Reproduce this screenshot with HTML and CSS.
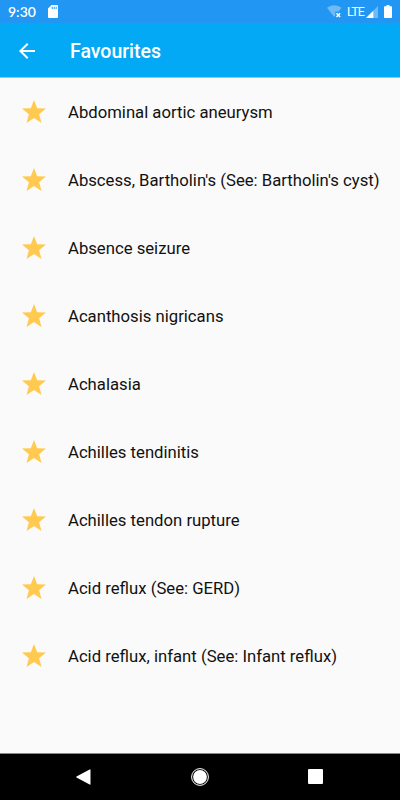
FILE: index.html
```html
<!DOCTYPE html>
<html lang="en">
<head>
    <meta charset="UTF-8">
    <meta name="viewport" content="width=device-width, initial-scale=1.0">
    <title>Favourites</title>
    <link rel="stylesheet" href="styles.css">
</head>
<body>
    <!-- shared star shape -->
    <svg class="defs">
        <symbol id="star" viewBox="0 0 24 23">
            <path d="M12 0l3.200 8.200 8.800.4-6.900 5.600 2.400 8.700L12 18l-7.500 4.900 2.400-8.700L0 8.600l8.800-.4z"/>
        </symbol>
    </svg>

    <div class="status-bar">
        <span class="time">9:30</span>
        <svg class="sd-card" viewBox="0 0 10 13">
            <path fill="#fff" d="M3.6 0H9a1 1 0 0 1 1 1v11a1 1 0 0 1-1 1H1a1 1 0 0 1-1-1V3.6z"/>
            <path fill="#2196f3" d="M3.7 1.7h1v2.4h-1zM5.7 1.7h1v2.4h-1zM7.7 1.7h1v2.4h-1z"/>
        </svg>
        <div class="status-icons">
            <svg class="wifi" viewBox="0 0 15 13">
                <path fill="#fff" fill-opacity=".35" d="M0 2.700C4 -.7 10.500 -.7 14.500 2.700L11.600 6.500H8.300v4L7.200 12z"/>
                <path stroke="#fff" stroke-width="1.500" d="M9.500 8.300l3.600 3.800M13.100 8.300l-3.600 3.800"/>
            </svg>
            <span class="network">LTE</span>
            <svg class="signal" viewBox="0 0 12 12">
                <path fill="#fff" fill-opacity=".35" d="M12 0v12H0z"/>
                <path fill="#fff" d="M7.300 4.700V12H0z"/>
            </svg>
            <svg class="battery" viewBox="0 0 8 13">
                <path fill="#fff" d="M2.500 0h3v1.300H7.300a.7.7 0 0 1 .7.7v10.300a.7.7 0 0 1-.7.7H.7a.7.7 0 0 1-.7-.7V2a.7.7 0 0 1 .7-.7h1.800z"/>
            </svg>
        </div>
    </div>

    <div class="app-bar">
        <svg class="back" viewBox="4 4 16 16">
            <path fill="#fff" d="M20 11H7.830l5.590-5.590L12 4l-8 8 8 8 1.410-1.410L7.830 13H20v-2z"/>
        </svg>
        <h1>Favourites</h1>
    </div>

    <ul class="list">
        <li><svg class="star"><use href="#star"/></svg><span>Abdominal aortic aneurysm</span></li>
        <li><svg class="star"><use href="#star"/></svg><span>Abscess, Bartholin's (See: Bartholin's cyst)</span></li>
        <li><svg class="star"><use href="#star"/></svg><span>Absence seizure</span></li>
        <li><svg class="star"><use href="#star"/></svg><span>Acanthosis nigricans</span></li>
        <li><svg class="star"><use href="#star"/></svg><span>Achalasia</span></li>
        <li><svg class="star"><use href="#star"/></svg><span>Achilles tendinitis</span></li>
        <li><svg class="star"><use href="#star"/></svg><span>Achilles tendon rupture</span></li>
        <li><svg class="star"><use href="#star"/></svg><span>Acid reflux (See: GERD)</span></li>
        <li><svg class="star"><use href="#star"/></svg><span>Acid reflux, infant (See: Infant reflux)</span></li>
    </ul>

    <div class="nav-bar">
        <svg viewBox="0 0 18 18">
            <path fill="#fff" d="M14.600 1.500a.6.6 0 0 1 .9.500v14a.6.6 0 0 1-.9.500L1.500 9.500a.6.6 0 0 1 0-1z"/>
        </svg>
        <svg viewBox="0 0 18 18">
            <circle cx="9" cy="9" r="8.400" fill="none" stroke="#fff" stroke-width="1"/>
            <circle cx="9" cy="9" r="6.900" fill="#fff"/>
        </svg>
        <svg viewBox="0 0 18 18">
            <rect x="1" y="1" width="15" height="15" rx="1" fill="#fff"/>
        </svg>
    </div>
</body>
</html>
```

FILE: styles.css
```css
body {
    margin: 0;
    height: 800px;
    display: flex;
    flex-direction: column;
    font-family: Roboto, sans-serif;
    background-color: #fafafa;
    overflow: hidden;
}

svg {
    display: block;
    flex: none;
}

.defs {
    display: none;
}

.status-bar {
    height: 23px;
    flex: none;
    display: flex;
    align-items: center;
    padding: 0 8px;
    background-color: #2196f3;
    color: white;
}

.time {
    width: 40px;
    font-family: Lato, sans-serif;
    font-size: 14px;
    font-weight: 600;
    line-height: 23px;
}

.sd-card {
    width: 10px;
    height: 13px;
}

.status-icons {
    margin-left: auto;
    display: flex;
    align-items: center;
}

.wifi {
    width: 15px;
    height: 13px;
}

.network {
    width: 18px;
    margin-left: 5px;
    font-size: 12.5px;
    letter-spacing: -0.9px;
    line-height: 24px;
}

.signal {
    width: 12px;
    height: 12px;
    margin: 0 0 0 1px;
}

.battery {
    width: 8px;
    height: 13px;
    margin-left: 6px;
}

.app-bar {
    height: 54px;
    flex: none;
    display: flex;
    align-items: center;
    padding-left: 19px;
    background-color: #03a9f4;
    border-bottom: 1px solid #81d0f7;
}

.back {
    width: 16px;
    height: 16px;
    margin-top: 1px;
}

h1 {
    margin: 2px 0 0 35px;
    font-size: 19.5px;
    font-weight: 500;
    color: white;
}

.list {
    flex: 1;
    margin: 0;
    padding: 0;
    list-style: none;
}

.list li {
    height: 68px;
    display: flex;
    align-items: center;
    padding-left: 22px;
    font-size: 16.7px;
    line-height: 20px;
    color: #111;
    white-space: nowrap;
}

.list span {
    padding-top: 2px;
}

.star {
    width: 24px;
    height: 23px;
    margin: 0 22px 1px 0;
    fill: #ffca4f;
}

.nav-bar {
    height: 46px;
    flex: none;
    display: flex;
    justify-content: center;
    align-items: center;
    gap: 98px;
    background-color: black;
    border-top: 1px solid #888;
}

.nav-bar svg {
    width: 18px;
    height: 18px;
}
```
